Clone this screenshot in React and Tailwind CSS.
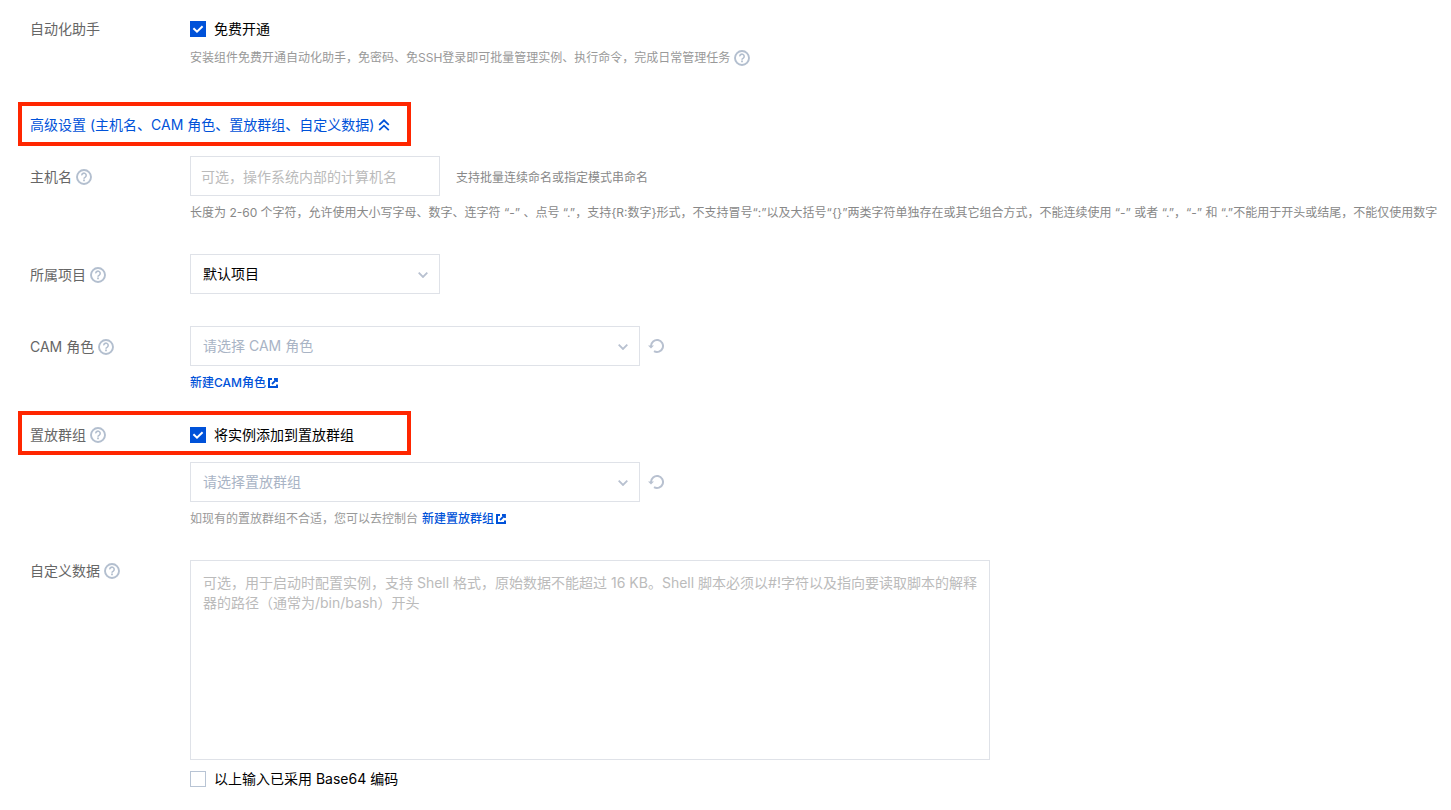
import { useState } from 'react';

function HelpIcon() {
  return (
    <button type="button" aria-label="帮助" className="ml-1 shrink-0">
      <svg width="16" height="16" viewBox="0 0 16 16" fill="none" stroke="#b3bfcf" strokeWidth="1.9">
        <circle cx="8" cy="8" r="7" />
        <path d="M5.8 6.4a2.2 2.2 0 1 1 3.5 1.7C8.4 8.6 8 8.9 8 9.8" strokeWidth="1.6" />
        <path d="M8 10.6v1.7" strokeWidth="1.8" />
      </svg>
    </button>
  );
}

function ExternalIcon() {
  return (
    <svg width="10" height="10" viewBox="0 0 10 10" fill="none" stroke="currentColor" strokeWidth="2">
      <path d="M4 1H1v8h8V6.5" />
      <path d="M6 1h3v3M8.8 1.2 4 6" strokeWidth="1.8" />
    </svg>
  );
}

function RefreshButton({ label }) {
  return (
    <button type="button" aria-label={label} className="ml-2">
      <svg width="16" height="16" viewBox="0 0 16 16" fill="none">
        <path d="M3 8.6V8a6 6 0 1 1 3 5.2" stroke="#b8c1d0" strokeWidth="2" />
        <path d="M0 7.4h6L3 10.6z" fill="#b8c1d0" />
      </svg>
    </button>
  );
}

function Row({ label, htmlFor, help, labelClass = '', className = 'px-3', children }) {
  return (
    <div className={`flex ${className}`}>
      <div className={`flex h-5 w-40 shrink-0 items-center text-[#666] ${labelClass}`}>
        <label htmlFor={htmlFor}>{label}</label>
        {help && <HelpIcon />}
      </div>
      <div className="min-w-0 grow">{children}</div>
    </div>
  );
}

function Checkbox({ id, label, defaultChecked }) {
  return (
    <div className="flex h-5 items-center">
      <span className="relative flex">
        <input
          id={id}
          type="checkbox"
          defaultChecked={defaultChecked}
          className="peer size-4 appearance-none border border-[#b8c4d4] bg-white checked:border-[#0052d9] checked:bg-[#0052d9]"
        />
        <svg
          viewBox="0 0 16 16"
          className="pointer-events-none absolute inset-0 hidden size-4 peer-checked:block"
          fill="none"
          stroke="#fff"
          strokeWidth="2"
        >
          <path d="M3.4 7.3 7 10.7l5.6-5.4" />
        </svg>
      </span>
      <label htmlFor={id} className="pl-2 text-black">{label}</label>
    </div>
  );
}

function Select({ id, label, options, placeholder, className }) {
  return (
    <div className={`relative ${className}`}>
      <select
        id={id}
        aria-label={label}
        className={`block h-10 w-full appearance-none border border-[#dfe2e8] bg-white px-3 ${placeholder ? 'text-[#a9b4c5]' : 'text-black'}`}
      >
        {options.map((option) => (
          <option key={option}>{option}</option>
        ))}
      </select>
      <svg
        width="10"
        height="6"
        viewBox="0 0 10 6"
        fill="none"
        stroke="#b8c1d0"
        strokeWidth="1.8"
        className="pointer-events-none absolute top-[18px] right-3"
      >
        <path d="M0.7 0.7 5 5 9.3 0.7" />
      </svg>
    </div>
  );
}

function NewLink({ children }) {
  return (
    <a href="#" className="inline-flex items-center gap-0.5 font-medium text-[#0052d9]">
      {children}
      <ExternalIcon />
    </a>
  );
}

export default function App() {
  const [open, setOpen] = useState(true);

  return (
    <form className="min-h-screen overflow-x-hidden bg-white pt-[19px] pb-5 pl-[18px] font-[Inter,'Noto_Sans_CJK_SC',sans-serif] text-sm/5">
      <Row label="自动化助手" htmlFor="assistant">
        <Checkbox id="assistant" label="免费开通" defaultChecked />
        <div className="mt-2.5 flex items-center text-xs/[18px] text-[#999]">
          安装组件免费开通自动化助手，免密码、免SSH登录即可批量管理实例、执行命令，完成日常管理任务
          <HelpIcon />
        </div>
      </Row>

      <div className="mt-[35px] flex h-11 w-[393px] items-center border-4 border-[#ff2600] px-2 pt-0.5">
        <button
          type="button"
          onClick={() => setOpen(!open)}
          className="flex items-center whitespace-nowrap text-[#0052d9]"
        >
          高级设置 (主机名、CAM 角色、置放群组、自定义数据)
          <svg
            width="12"
            height="12"
            viewBox="0 0 12 12"
            fill="none"
            stroke="currentColor"
            strokeWidth="1.8"
            className={open ? 'ml-1' : 'ml-1 rotate-180'}
          >
            <path d="M1.2 5.8 6 1.3l4.8 4.5M1.2 11.2 6 6.7l4.8 4.5" />
          </svg>
        </button>
      </div>

      {open && (
        <>
          <Row label="主机名" htmlFor="hostname" help className="mt-2.5 pl-3" labelClass="mt-[11px]">
            <div className="flex items-center">
              <input
                id="hostname"
                type="text"
                placeholder="可选，操作系统内部的计算机名"
                className="h-10 w-[250px] border border-[#dfe2e8] px-2.5 placeholder:text-[#bbb]"
              />
              <span className="ml-4 pt-1 text-xs text-[#888]">支持批量连续命名或指定模式串命名</span>
            </div>
            <p className="mt-2 text-xs/[18px] whitespace-nowrap text-[#888]">
              长度为 2-60 个字符，允许使用大小写字母、数字、连字符 “-” 、点号 “.”，支持{'{R:数字}'}形式，不支持冒号“:”以及大括号“{'{}'}”两类字符单独存在或其它组合方式，不能连续使用 “-” 或者 “.”，“-” 和 “.”不能用于开头或结尾，不能仅使用数字
            </p>
          </Row>

          <Row label="所属项目" htmlFor="project" help className="mt-8 px-3" labelClass="mt-[11px]">
            <Select id="project" options={['默认项目']} className="w-[250px]" />
          </Row>

          <Row label="CAM 角色" htmlFor="role" help className="mt-8 px-3" labelClass="mt-[11px]">
            <div className="flex items-center">
              <Select id="role" options={['请选择 CAM 角色']} placeholder className="w-[450px]" />
              <RefreshButton label="刷新 CAM 角色" />
            </div>
            <div className="mt-2 flex text-xs/[18px]">
              <NewLink>新建CAM角色</NewLink>
            </div>
          </Row>

          <Row
            label="置放群组"
            htmlFor="use-group"
            help
            className="mt-[19px] h-11 w-[393px] items-center border-4 border-[#ff2600] px-2 pt-1"
          >
            <Checkbox id="use-group" label="将实例添加到置放群组" defaultChecked />
          </Row>
          <div className="mt-[7px] pr-3 pl-[172px]">
            <div className="flex items-center">
              <Select label="置放群组" options={['请选择置放群组']} placeholder className="w-[450px]" />
              <RefreshButton label="刷新置放群组" />
            </div>
            <div className="mt-2 flex gap-1 text-xs/[18px] text-[#999]">
              如现有的置放群组不合适，您可以去控制台
              <NewLink>新建置放群组</NewLink>
            </div>
          </div>

          <Row label="自定义数据" htmlFor="user-data" help className="mt-8 px-3" labelClass="mt-px">
            <textarea
              id="user-data"
              placeholder="可选，用于启动时配置实例，支持 Shell 格式，原始数据不能超过 16 KB。Shell 脚本必须以#!字符以及指向要读取脚本的解释器的路径（通常为/bin/bash）开头"
              className="block h-[200px] w-full max-w-[800px] resize-none border border-[#dfe2e8] p-3 placeholder:text-[#bbb]"
            />
            <div className="mt-[9px]">
              <Checkbox id="base64" label="以上输入已采用 Base64 编码" />
            </div>
          </Row>
        </>
      )}
    </form>
  );
}
